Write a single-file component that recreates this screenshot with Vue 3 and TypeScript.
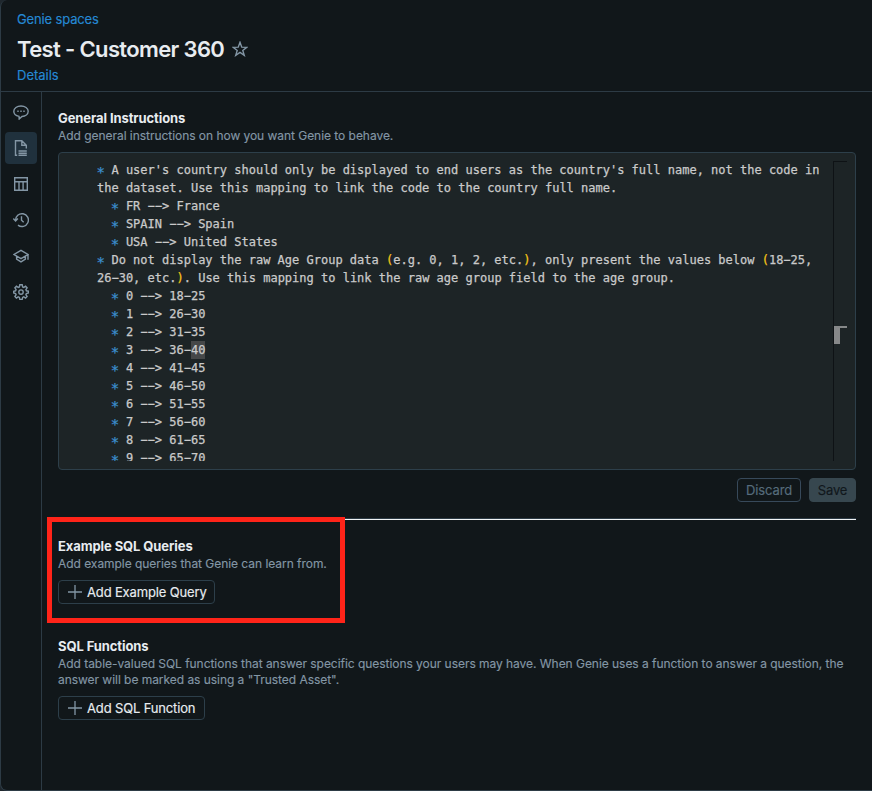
<script setup lang="ts">
interface Segment {
  text: string
  kind?: 'bullet' | 'paren' | 'selected'
}

const star: Segment = { text: '*', kind: 'bullet' }

const ageGroups = ['18-25', '26-30', '31-35', '36-40', '41-45', '46-50', '51-55', '56-60', '61-65', '65-70']

const lines: Segment[][] = [
  [star, { text: " A user's country should only be displayed to end users as the country's full name, not the code in" }],
  [{ text: 'the dataset. Use this mapping to link the code to the country full name.' }],
  [{ text: '  ' }, star, { text: ' FR −−> France' }],
  [{ text: '  ' }, star, { text: ' SPAIN −−> Spain' }],
  [{ text: '  ' }, star, { text: ' USA −−> United States' }],
  [
    star,
    { text: ' Do not display the raw Age Group data ' },
    { text: '(', kind: 'paren' },
    { text: 'e.g. 0, 1, 2, etc.' },
    { text: ')', kind: 'paren' },
    { text: ', only present the values below ' },
    { text: '(', kind: 'paren' },
    { text: '18−25,' },
  ],
  [
    { text: '26−30, etc.' },
    { text: ')', kind: 'paren' },
    { text: '. Use this mapping to link the raw age group field to the age group.' },
  ],
  ...ageGroups.map((range, i): Segment[] => {
    const [from, to] = range.split('-')
    return [
      { text: '  ' },
      star,
      { text: ` ${i} −−> ${from}−` },
      { text: to, kind: i === 3 ? 'selected' : undefined },
    ]
  }),
]
</script>

<template>
  <div class="app">
    <header class="header">
      <a class="link crumb">Genie spaces</a>
      <div class="title-row">
        <h1 class="title">Test - Customer 360</h1>
        <svg class="star" viewBox="0 0 16 16"><path d="M8 1.3l1.75 4.85 5.1.15-4.05 3.1 1.45 4.95L8 11.4l-4.25 2.95L5.2 9.4 1.15 6.3l5.1-.15z" /></svg>
      </div>
      <a class="link details">Details</a>
    </header>
    <div class="body">
      <nav class="rail">
        <span class="item">
          <svg viewBox="0 0 16 16"><path d="M6 12.4C3 11.9.8 10 .8 7.3.8 4.300 4 2 8 2s7.200 2.300 7.200 5.300-3 5-6.200 5.200L6.200 15z" /><path d="M4.300 7.300h1.400M7.300 7.300h1.400M10.300 7.300h1.400" /></svg>
        </span>
        <span class="item active">
          <svg viewBox="0 0 16 16"><path d="M4.200 15.300H2.500V.8h6.300l4.500 4.500v3.200M8.800.8v4.500h4.500M5.500 11h8.300M5.500 13.200h8.300M5.500 15.300h8.300" /></svg>
        </span>
        <span class="item">
          <svg viewBox="0 0 16 16"><path d="M1.700 1.700h12.600v12.600H1.700zM1.700 5.700h12.600M6 5.700v8.600M10.100 5.700v8.600" /></svg>
        </span>
        <span class="item">
          <svg viewBox="0 0 16 16"><path d="M2.600 8.500A6.400 6.400 0 1 1 5 13.100M.3 6.600l2.300 2.300 2.300-2.300M8.500 4.300v4l2.200 2" /></svg>
        </span>
        <span class="item">
          <svg viewBox="0 0 16 16"><path d="M8 2.300l7 4.200-7 4.200-7-4.200zM3.600 8.300v2.900L8 13.900l4.400-2.700V8.300M15 6.500v5.200" /></svg>
        </span>
        <span class="item">
          <svg viewBox="0 0 16 16"><path d="M6.800.8h2.400l.4 2.100 1.200.5 1.800-1.200 1.500 1.600-1.200 1.800.5 1.200 2 .4v1.800l-2 .5-.5 1.200 1.200 1.800-1.500 1.600-1.800-1.200-1.200.5-.4 2H6.800l-.4-2-1.200-.5-1.800 1.200-1.500-1.600 1.200-1.800-.5-1.200-1.900-.5V7.200l1.900-.4.5-1.200L1.900 3.800l1.500-1.600 1.800 1.200 1.200-.5z" /><circle cx="8" cy="8.100" r="2.200" /></svg>
        </span>
      </nav>
      <main class="main">
        <section>
          <h2 class="heading">General Instructions</h2>
          <p class="desc">Add general instructions on how you want Genie to behave.</p>
          <div class="editor">
            <div class="code">
              <div v-for="(line, i) in lines" :key="i" class="line"><span v-for="(seg, j) in line" :key="j" :class="seg.kind">{{ seg.text }}</span></div>
            </div>
            <div class="ruler"><span class="cursor"></span><span class="mark"></span></div>
          </div>
          <div class="actions">
            <button class="btn discard">Discard</button>
            <button class="btn save">Save</button>
          </div>
        </section>
        <hr class="divider" />
        <section class="queries">
          <div class="highlight"></div>
          <h2 class="heading">Example SQL Queries</h2>
          <p class="desc">Add example queries that Genie can learn from.</p>
          <button class="btn add q">
            <svg viewBox="0 0 16 16"><path d="M8 1v14M1 8h14" /></svg><span>Add Example Query</span>
          </button>
        </section>
        <section class="functions">
          <h2 class="heading">SQL Functions</h2>
          <p class="desc">Add table-valued SQL functions that answer specific questions your users may have. When Genie uses a function to answer a question, the<br />answer will be marked as using a "Trusted Asset".</p>
          <button class="btn add f">
            <svg viewBox="0 0 16 16"><path d="M8 1v14M1 8h14" /></svg><span>Add SQL Function</span>
          </button>
        </section>
      </main>
    </div>
  </div>
</template>

<style>
body {
  background: #1f272d;
}
</style>

<style scoped>
.app {
  box-sizing: border-box;
  width: 872px;
  height: 791px;
  display: flex;
  flex-direction: column;
  overflow: hidden;
  background: #11171a;
  border-left: 1px solid #2d3b45;
  border-bottom: 1px solid #2d3b45;
  border-radius: 7px 0 0 7px;
  font-family: Inter, sans-serif;
  font-size: 13px;
  color: #e8ecf0;
}
h1, h2, p { margin: 0; }
svg {
  display: block;
  flex: none;
  width: 16px;
  height: 16px;
  fill: none;
  stroke: #8396a5;
  stroke-width: 1.4;
}
.header {
  box-sizing: border-box;
  height: 92px;
  padding: 9px 16px 0;
  border-bottom: 1px solid #2d3b45;
}
.link {
  display: block;
  width: max-content;
  line-height: 20px;
  color: #2589d4;
  -webkit-text-stroke: 0.15px currentColor;
}
.crumb { letter-spacing: -0.14px; }
.title-row {
  display: flex;
  align-items: center;
  gap: 8px;
  height: 28px;
  margin: 6px 0 2px;
}
.title {
  font-size: 22px;
  font-weight: 600;
  line-height: 28px;
  letter-spacing: -0.64px;
  white-space: nowrap;
}
.body {
  flex: 1;
  display: flex;
  min-height: 0;
}
.rail {
  box-sizing: border-box;
  width: 41px;
  display: flex;
  flex-direction: column;
  gap: 4px;
  padding: 4px;
  border-right: 1px solid #2d3b45;
}
.item {
  display: flex;
  align-items: center;
  justify-content: center;
  width: 32px;
  height: 32px;
  border-radius: 4px;
}
.active { background: #20313d; }
.main {
  width: 798px;
  padding: 17px 0 0 16px;
}
.heading {
  font-size: 13px;
  font-weight: 700;
  line-height: 18px;
  letter-spacing: -0.09px;
}
.desc {
  margin-top: 1px;
  font-size: 12px;
  line-height: 16px;
  letter-spacing: -0.041px;
  color: #8396a5;
  white-space: nowrap;
  -webkit-text-stroke: 0.15px currentColor;
}
.editor {
  box-sizing: border-box;
  display: flex;
  justify-content: space-between;
  height: 318px;
  margin-top: 8px;
  padding: 8px 8px 8px 38px;
  background: #1d2426;
  border: 1px solid #2d3f4a;
  border-radius: 4px;
}
.code {
  height: 300px;
  overflow: hidden;
  font-family: "DejaVu Sans Mono", monospace;
  font-size: 12px;
  color: #cacaca;
  -webkit-text-stroke: 0.25px currentColor;
}
.line {
  height: 18px;
  line-height: 18px;
  white-space: pre;
}
.bullet {
  display: inline-block;
  width: 7.224px;
  font-size: 14px;
  line-height: 0;
  text-indent: -0.6px;
  color: #3c8fd0;
  vertical-align: -3px;
}
.paren { color: #f5c518; }
.selected {
  display: inline-block;
  height: 18px;
  vertical-align: top;
  background: #454748;
}
.ruler {
  box-sizing: border-box;
  width: 14px;
  height: 300px;
  padding-top: 164px;
  border-left: 1px solid #0e1215;
  border-top: 1px solid #0e1215;
}
.cursor, .mark {
  display: block;
  background: #868889;
}
.cursor {
  width: 13px;
  height: 2px;
}
.mark {
  width: 6px;
  height: 16px;
}
.actions {
  display: flex;
  justify-content: flex-end;
  gap: 8px;
  margin-top: 8px;
}
.btn {
  box-sizing: border-box;
  display: flex;
  align-items: center;
  justify-content: center;
  height: 24px;
  padding: 0;
  border: 1px solid #2d3f4a;
  border-radius: 4px;
  background: transparent;
  font: 13px/20px Inter, sans-serif;
  color: #e8ecf0;
  white-space: nowrap;
  -webkit-text-stroke: 0.15px currentColor;
}
.discard { width: 64px; border-color: #37495a; color: #566c7c; letter-spacing: -0.1px; }
.save { width: 47px; border-color: #37474f; background: #37474f; color: #11171c; letter-spacing: -0.1px; }
.divider {
  height: 1px;
  margin: 16px 0 0;
  border: 0;
  border-top: 1px solid #2d3b45;
  background: #f0f3f5;
}
.queries {
  position: relative;
  padding-top: 17px;
}
.highlight {
  position: absolute;
  left: -11px;
  top: -3px;
  box-sizing: border-box;
  width: 298px;
  height: 106px;
  border: 5px solid #ff2419;
}
.add {
  justify-content: flex-start;
  gap: 4px;
  margin-top: 8px;
  padding-left: 8px;
  letter-spacing: -0.15px;
}
.add svg { stroke-width: 1.3; }
.q { width: 157px; }
.f { width: 147px; }
.functions { padding-top: 33px; }
</style>
